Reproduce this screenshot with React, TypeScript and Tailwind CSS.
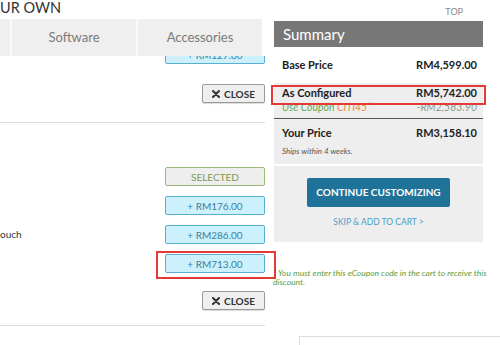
import React from "react";

function XIcon() {
  return (
    <svg width="8" height="8" viewBox="0 0 8 8" className="mr-[4px]">
      <path d="M1 1 L7 7 M7 1 L1 7" stroke="#333" strokeWidth="2" strokeLinecap="round" />
    </svg>
  );
}

function CloseBtn() {
  return (
    <div className="ml-[202px] flex h-[19px] w-[63px] items-center justify-center rounded-[2px] border border-[#9a9a9a] bg-[#efefef] text-[10px] font-bold leading-none text-[#333] shadow-[0_1px_1px_rgba(0,0,0,0.15)]">
      <XIcon />
      CLOSE
    </div>
  );
}

function PriceBtn({ label }: { label: string }) {
  return (
    <div className="flex h-[19px] w-[100px] items-center justify-center rounded-[2px] border border-[#5aaecf] bg-[#ccf0fc] text-[10px] leading-none text-[#3d7f9c]">
      {label}
    </div>
  );
}

function Row({ label, children }: { label?: string; children: React.ReactNode }) {
  return (
    <div className="flex h-[19px] items-center justify-between">
      <span className="text-[10px] text-[#333]">{label}</span>
      {children}
    </div>
  );
}

export default function App() {
  return (
    <div className="relative h-[345px] w-[500px] overflow-hidden bg-white [font-family:Lato,'Open_Sans',sans-serif]">
      <div className="flex">
        {/* Left column */}
        <div className="flex w-[265px] flex-col">
          <div className="h-[20px] pt-[1px] text-[14.5px] leading-[14px] text-[#333]">UR OWN</div>
          <div className="-mt-[1px] flex h-[37px] w-[262px] bg-[#efefef] text-[13px] text-[#7a7a7a]">
            <div className="w-[10px]" />
            <div className="flex w-[126px] items-center justify-center border-l-2 border-[#fafafa]">Software</div>
            <div className="flex w-[126px] items-center justify-center border-l-2 border-[#fafafa]">Accessories</div>
          </div>
          <div className="ml-[165px] h-[8px] w-[100px] overflow-hidden">
            <div className="-mt-[11px]">
              <PriceBtn label="+ RM127.00" />
            </div>
          </div>
          <div className="mt-[20px]">
            <CloseBtn />
          </div>
          <div className="mt-[19px] h-px bg-[#dddddd]" />
          <div className="mt-[44px] flex flex-col gap-[10px]">
            <Row>
              <div className="flex h-[19px] w-[100px] items-center justify-center rounded-[2px] border border-[#9cb77a] bg-[#eeeeee] text-[10px] leading-none text-[#7d9a55]">
                SELECTED
              </div>
            </Row>
            <Row>
              <PriceBtn label="+ RM176.00" />
            </Row>
            <Row label="ouch">
              <PriceBtn label="+ RM286.00" />
            </Row>
            <Row>
              <PriceBtn label="+ RM713.00" />
            </Row>
          </div>
          <div className="mt-[18px]">
            <CloseBtn />
          </div>
          <div className="mt-[15px] h-px bg-[#dddddd]" />
        </div>

        {/* Right column */}
        <div className="ml-[9px] flex w-[209px] flex-col">
          <div className="flex h-[21px] justify-end pr-[20px] pt-[7px] text-[9px] leading-[10px] text-[#8a8a8a]">TOP</div>
          <div className="flex h-[26px] items-center bg-[#777777] pl-[9px] text-[15px] text-white">Summary</div>
          <div className="flex h-[36px] items-center justify-between bg-white pl-[8px] pr-[6px] text-[11px] font-bold text-[#222]">
            <span>Base Price</span>
            <span>RM4,599.00</span>
          </div>
          <div className="h-[36px] border-b border-[#555] bg-[#eeeeee] pl-[8px] pr-[6px] pt-[3px]">
            <div className="flex h-[15px] items-center justify-between text-[11px] font-bold text-[#222]">
              <span>As Configured</span>
              <span>RM5,742.00</span>
            </div>
            <div className="flex h-[13px] items-center justify-between text-[10.5px] italic leading-none">
              <span className="text-[#6aa84f]">
                Use Coupon <span className="text-[#f08a3c]">CITI45*</span>
              </span>
              <span className="text-[#8a9a8a]">-RM2,583.90</span>
            </div>
          </div>
          <div className="h-[45px] bg-[#eeeeee] pl-[8px] pr-[6px] pt-[7px]">
            <div className="flex h-[15px] items-center justify-between text-[11px] font-bold text-[#222]">
              <span>Your Price</span>
              <span>RM3,158.10</span>
            </div>
            <div className="mt-[4px] h-[12px] text-[8px] italic leading-[12px] text-[#555]">Ships within 4 weeks.</div>
          </div>
          <div className="h-[2px] bg-white" />
          <div className="flex h-[76px] flex-col items-center bg-[#eeeeee] pt-[12px]">
            <div className="flex h-[29px] w-[143px] items-center justify-center rounded-[2px] bg-[#1f7399] text-[10px] font-bold text-white">
              CONTINUE CUSTOMIZING
            </div>
            <div className="mt-[9px] h-[12px] text-[8.5px] leading-[12px] text-[#4aa0c8]">SKIP &amp; ADD TO CART &gt;</div>
          </div>
          <div className="-ml-[1px] mt-[27px] w-[216px] text-[8.5px] italic leading-[9px] text-[#5d9b3b]">
            * You must enter this eCoupon code in the cart to receive this discount.
          </div>
          <div className="ml-[25px] mt-[49px] h-[20px] w-[230px] border border-[#dddddd]" />
        </div>
      </div>

      {/* annotation overlays */}
      <div className="pointer-events-none absolute left-[271px] top-[85px] h-[20px] w-[215px] border-2 border-[#e53935]" />
      <div className="pointer-events-none absolute left-[156px] top-[251px] h-[28px] w-[120px] border-2 border-[#e53935]" />
    </div>
  );
}
